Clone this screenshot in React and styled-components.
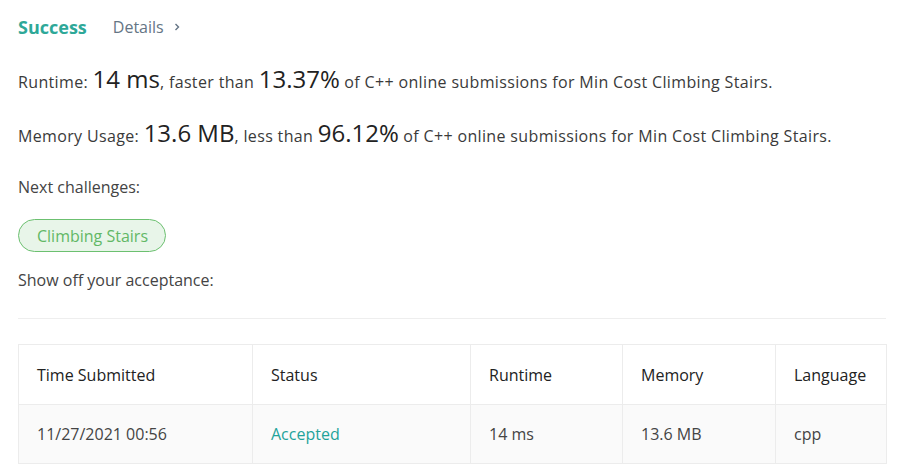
import React from 'react'
import styled, { createGlobalStyle } from 'styled-components'

const GlobalStyle = createGlobalStyle`
  body {
    margin: 0;
    background: #fff;
    font-family: "Open Sans", "Noto Sans", sans-serif;
    color: #333;
  }
`

const columns = [
  { key: 'time', label: 'Time Submitted', width: 234 },
  { key: 'status', label: 'Status', width: 218 },
  { key: 'runtime', label: 'Runtime', width: 152 },
  { key: 'memory', label: 'Memory', width: 153 },
  { key: 'lang', label: 'Language', width: 111 },
]

const row = {
  time: '11/27/2021 00:56',
  status: 'Accepted',
  runtime: '14 ms',
  memory: '13.6 MB',
  lang: 'cpp',
}

const App = () => {
  return (
    <>
      <GlobalStyle />
      <PageWrapper>
        <TopBar>
          <SuccessTitle>Success</SuccessTitle>
          <DetailsLink>
            Details
            <Chevron viewBox="0 0 10 10">
              <path d="M3.5 2 L6.5 5 L3.5 8" />
            </Chevron>
          </DetailsLink>
        </TopBar>

        <StatLine gap={20}>
          Runtime: <Big>14 ms</Big>, faster than <Big>13.37%</Big> of C++ online submissions for Min Cost Climbing Stairs.
        </StatLine>
        <StatLine gap={21}>
          Memory Usage: <Big>13.6 MB</Big>, less than <Big>96.12%</Big> of C++ online submissions for Min Cost Climbing Stairs.
        </StatLine>

        <Label gap={27}>Next challenges:</Label>
        <Tags>
          <Tag>Climbing Stairs</Tag>
        </Tags>
        <Label gap={17}>Show off your acceptance:</Label>

        <Divider />

        <Table>
          <colgroup>
            {columns.map((c) => (
              <col key={c.key} style={{ width: c.width }} />
            ))}
          </colgroup>
          <thead>
            <tr>
              {columns.map((c) => (
                <HeadCell key={c.key}>{c.label}</HeadCell>
              ))}
            </tr>
          </thead>
          <tbody>
            <BodyRow>
              {columns.map((c) => (
                <Cell key={c.key} accepted={c.key === 'status'}>
                  {row[c.key]}
                </Cell>
              ))}
            </BodyRow>
          </tbody>
        </Table>
      </PageWrapper>
    </>
  )
}

export default App

const PageWrapper = styled.div`
  padding: 12px 19px 0 18px;
  display: flex;
  flex-direction: column;
  font-size: 16px;
`

const TopBar = styled.div`
  display: flex;
  align-items: center;
  gap: 26px;
  height: 30px;
`

const SuccessTitle = styled.span`
  font-size: 18px;
  font-weight: 700;
  color: #2ea898;
`

const DetailsLink = styled.span`
  display: flex;
  align-items: center;
  gap: 8px;
  color: #657585;
  font-size: 16px;
`

const Chevron = styled.svg`
  width: 10px;
  height: 10px;
  fill: none;
  stroke: #657585;
  stroke-width: 1.4;
`

const StatLine = styled.div`
  margin-top: ${(props) => props.gap}px;
  height: 33px;
  display: flex;
  align-items: baseline;
  white-space: pre;
  letter-spacing: 0.35px;
  color: #3a3a3a;
`

const Big = styled.span`
  font-size: 24px;
  letter-spacing: 0;
  color: #222;
`

const Label = styled.div`
  margin-top: ${(props) => props.gap}px;
  line-height: 22px;
  color: #444;
`

const Tags = styled.div`
  display: flex;
  margin-top: 21px;
`

const Tag = styled.span`
  height: 31px;
  padding: 0 17px 0 18px;
  display: flex;
  align-items: center;
  border: 1px solid #6cc070;
  border-radius: 17px;
  background: #e8f5e9;
  color: #62b866;
`

const Divider = styled.hr`
  margin: 27px 0 25px;
  border: 0;
  border-top: 1px solid #eeeeee;
`

const Table = styled.table`
  border-collapse: collapse;
  width: 868px;
  table-layout: fixed;
`

const HeadCell = styled.th`
  box-sizing: border-box;
  height: 60px;
  padding: 0 18px;
  text-align: left;
  font-weight: 400;
  color: #222;
  border: 1px solid #ececec;
  background: #fff;
`

const BodyRow = styled.tr`
  background: #fafafa;
`

const Cell = styled.td`
  box-sizing: border-box;
  height: 59px;
  padding: 0 18px;
  border: 1px solid #ececec;
  color: ${(props) => (props.accepted ? '#1fa39a' : '#444')};
`
